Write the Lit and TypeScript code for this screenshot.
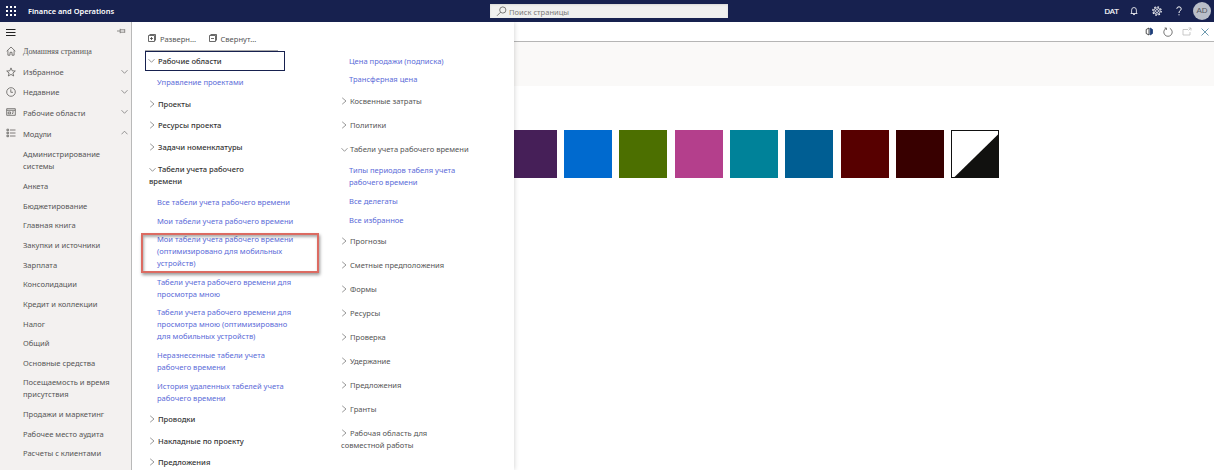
import { LitElement, html, css, svg, nothing } from "lit";
import { customElement } from "lit/decorators.js";
import { styleMap } from "lit/directives/style-map.js";

type Kind = "head" | "link" | "sub";
interface Row {
  text: string;
  /** distance from the top of this row to the top of the next one */
  h: number;
  kind?: Kind;
  open?: boolean;
}

const modules: Row[] = [
  { text: "Администрирование\nсистемы", h: 32 },
  { text: "Анкета", h: 20 },
  { text: "Бюджетирование", h: 19 },
  { text: "Главная книга", h: 20 },
  { text: "Закупки и источники", h: 20 },
  { text: "Зарплата", h: 19 },
  { text: "Консолидации", h: 20 },
  { text: "Кредит и коллекции", h: 20 },
  { text: "Налог", h: 19 },
  { text: "Общий", h: 20 },
  { text: "Основные средства", h: 19 },
  { text: "Посещаемость и время\nприсутствия", h: 32 },
  { text: "Продажи и маркетинг", h: 20 },
  { text: "Рабочее место аудита", h: 19 },
  { text: "Расчеты с клиентами", h: 16 },
];

const leftTree: Row[] = [
  { text: "Управление проектами", kind: "link", h: 22 },
  { text: "Проекты", kind: "head", h: 21 },
  { text: "Ресурсы проекта", kind: "head", h: 22 },
  { text: "Задачи номенклатуры", kind: "head", h: 22 },
  { text: "Табели учета рабочего\nвремени", kind: "head", open: true, h: 33 },
  { text: "Все табели учета рабочего времени", kind: "link", h: 19 },
  { text: "Мои табели учета рабочего времени", kind: "link", h: 18 },
  { text: "Мои табели учета рабочего времени\n(оптимизировано для мобильных\nустройств)", kind: "link", h: 43 },
  { text: "Табели учета рабочего времени для\nпросмотра мною", kind: "link", h: 30 },
  { text: "Табели учета рабочего времени для\nпросмотра мною (оптимизировано\nдля мобильных устройств)", kind: "link", h: 43 },
  { text: "Неразнесенные табели учета\nрабочего времени", kind: "link", h: 31 },
  { text: "История удаленных табелей учета\nрабочего времени", kind: "link", h: 33 },
  { text: "Проводки", kind: "head", h: 22 },
  { text: "Накладные по проекту", kind: "head", h: 21 },
  { text: "Предложения", kind: "head", h: 12 },
];

const rightTree: Row[] = [
  { text: "Цена продажи (подписка)", kind: "link", h: 18 },
  { text: "Трансферная цена", kind: "link", h: 22 },
  { text: "Косвенные затраты", kind: "sub", h: 24 },
  { text: "Политики", kind: "sub", h: 24 },
  { text: "Табели учета рабочего времени", kind: "sub", open: true, h: 21 },
  { text: "Типы периодов табеля учета\nрабочего времени", kind: "link", h: 31 },
  { text: "Все делегаты", kind: "link", h: 19 },
  { text: "Все избранное", kind: "link", h: 21 },
  { text: "Прогнозы", kind: "sub", h: 24 },
  { text: "Сметные предположения", kind: "sub", h: 24 },
  { text: "Формы", kind: "sub", h: 24 },
  { text: "Ресурсы", kind: "sub", h: 24 },
  { text: "Проверка", kind: "sub", h: 24 },
  { text: "Удержание", kind: "sub", h: 24 },
  { text: "Предложения", kind: "sub", h: 24 },
  { text: "Гранты", kind: "sub", h: 24 },
  { text: "Рабочая область для\nсовместной работы", kind: "sub", h: 24 },
];

const swatches = [
  { color: "#461f58", gap: 0 },
  { color: "#006acf", gap: 7 },
  { color: "#4c6f00", gap: 7 },
  { color: "#b43f8c", gap: 8 },
  { color: "#008299", gap: 7 },
  { color: "#005e93", gap: 7 },
  { color: "#570000", gap: 8 },
  { color: "#380000", gap: 7 },
];

const icon = (w: number, h: number, body: unknown, cls = "") =>
  html`<svg class="ic ${cls}" width=${w} height=${h} viewBox="0 0 ${w} ${h}">${body}</svg>`;

const chevronDown = icon(7, 6, svg`<path d="M.5 1.2 3.5 4.3 6.5 1.2"/>`, "chev");
const chevronUp = icon(7, 6, svg`<path d="M.5 4.3 3.5 1.2 6.5 4.3"/>`, "chev");
const chevronRight = icon(7, 8, svg`<path d="M1.2 .8 5 4 1.2 7.2"/>`, "chev");

const icons = {
  home: icon(10, 10, svg`<path d="M.7 5.2 5 1 9.3 5.2M1.9 4.4V9.2H4V6.3H6V9.2H8.1V4.4"/>`),
  star: icon(10, 10, svg`<path d="M5 .9 6.2 3.8 9.3 4 6.9 6 7.7 9 5 7.4 2.3 9 3.1 6 .7 4 3.8 3.8Z"/>`),
  clock: icon(10, 10, svg`<circle cx="5" cy="5" r="4.3"/><path d="M4.8 2.3V5.3H7"/>`),
  spaces: icon(10, 10, svg`<path d="M.7 1.7H9.3V8.3H.7ZM.7 3.3H9.3M2.2 5H4.6V6.9H2.2ZM6 5H8M6 6.5H7.2"/>`),
  modules: icon(10, 10, svg`<path d="M.9 1.2H2.6V2.7H.9ZM.9 4.2H2.6V5.7H.9ZM.9 7.2H2.6V8.7H.9ZM4 2H9.5M4 5H9.5M4 8H9.5"/>`),
};

@customElement("app-root")
export class AppRoot extends LitElement {
  static styles = css`
    :host {
      display: flex;
      flex-direction: column;
      width: 1214px;
      height: 470px;
      overflow: hidden;
      position: relative;
      background: #fff;
      color: #555;
      font: 7.58px/12px "Noto Sans", "Open Sans", sans-serif;
    }
    * { box-sizing: border-box; }
    .ic { display: block; flex: none; fill: none; stroke: #605e5c; stroke-width: 0.8; }
    .ic.chev { stroke: #777; stroke-width: 0.75; }
    .ic.light { stroke: #fff; }
    .ic.solid { fill: #fff; stroke: none; }

    .topbar { flex: none; height: 22px; display: flex; align-items: center; background: #17214f; color: #fff; }
    .waffle { margin-left: 6px; }
    .brand { margin-left: 12px; width: 462px; font-weight: 600; font-size: 7.45px; white-space: nowrap; }
    .search {
      width: 238px; height: 14px; padding: 0 0 0 6px; display: flex; align-items: center; gap: 2px;
      background: #f0f0ef; color: #7c7a78; font-size: 7.55px;
      box-shadow: inset 0 1px 2px #d8d8d6;
    }
    .search span { padding-top: 2px; }
    .tools { margin-left: auto; display: flex; align-items: center; }
    .company { margin: 2px 11px 0 0; font: 7.6px/12px "Liberation Sans", sans-serif; -webkit-text-stroke: 0.2px #fff; }
    .bell { margin-right: 14px; }
    .gear { margin-right: 14px; }
    .help { margin-right: 11px; }
    .avatar {
      width: 18px; height: 18px; margin-right: 3px; border-radius: 50%; background: #b9bec8;
      color: #54575f; font: 8px/18px "Liberation Sans", sans-serif; text-align: center;
    }

    .body { flex: 1; display: flex; min-height: 0; }
    .side { flex: none; width: 132px; background: #f3f1f0; border-right: 1px solid #b9b9b9; }
    .sidehead { height: 19px; display: flex; justify-content: space-between; padding: 6px 5px 0 6px; }
    .nav { display: flex; align-items: center; padding: 0 3px 0 6px; }
    .nav .label { flex: 1; margin-left: 7px; padding-top: 1px; }
    .nav .label.home { font-family: "Liberation Serif", serif; font-size: 8px; padding-top: 2px; }
    .modules { padding: 5px 0 0 23px; }
    .row { white-space: pre; }

    .panel { flex: none; width: 382px; display: flex; box-shadow: 0 0 5px #0003; clip-path: inset(0 -8px 0 0); z-index: 1; background: #fff; }
    .left { width: 193px; padding: 11px 0 0 13px; }
    .right { padding: 33px 0 0 15px; }
    .actions { display: flex; height: 18px; padding: 0 0 0 3px; width: 133px; border-bottom: 1px solid #aaa; }
    .action { display: flex; width: 60.5px; gap: 4px; }
    .action .ic { margin-top: 1px; stroke: #444; }
    .focus {
      width: 140px; height: 20px; display: flex; align-items: center; border: 1px solid #17214f; padding: 0 0 0 2px;
    }
    .tree { padding: 5px 0 0 4px; }
    .head, .focus { color: #333; font-weight: 500; }
    .link { color: #5b6bd8; padding-left: 8px; }
    .right .row { margin-left: 1px; }
    .row .ic { display: inline-block; vertical-align: -1px; margin-right: 2px; }
    .focus .ic { vertical-align: 0; margin-right: 3px; }
    .mark {
      position: absolute; left: 141px; top: 233px; width: 178px; height: 40px;
      border: 2px solid #dc6b62; box-shadow: 1px 2px 3px #0006, inset 1px 2px 3px #0005; z-index: 2;
    }

    .main { flex: 1; min-width: 0; }
    .mainbar { height: 20px; display: flex; align-items: center; justify-content: flex-end; border-bottom: 1px solid #b5b5b5; padding-right: 5px; }
    .mainbar .ic + .ic { margin-left: 9px; }
    .band { height: 44px; background: #faf9f8; }
    .colors { display: flex; margin-top: 44px; }
    .swatch { width: 48px; height: 48px; }
    .swatch.first { width: 43px; }
    .contrast { margin-left: 7px; display: block; }
  `;

  private tree(rows: Row[]) {
    return rows.map(
      (r) => html`<div class="row ${r.kind ?? ""}" style=${styleMap({ height: `${r.h}px` })}
        >${r.kind === "head" || r.kind === "sub" ? (r.open ? chevronDown : chevronRight) : nothing}${r.text}</div>`
    );
  }

  private nav(ic: unknown, label: string, h: number, chev: unknown, cls = "") {
    return html`<div class="nav" style=${styleMap({ height: `${h}px` })}>
      ${ic}<span class="label ${cls}">${label}</span>${chev}
    </div>`;
  }

  render() {
    return html`
      <header class="topbar">
        ${icon(10, 10, [0, 4, 8].map((y) => [0, 4, 8].map((x) => svg`<rect x=${x} y=${y} width="2" height="2"/>`)), "waffle solid")}
        <span class="brand">Finance and Operations</span>
        <div class="search">
          ${icon(11, 11, svg`<circle cx="6.8" cy="4" r="3.1"/><path d="M4.6 6.2 1 9.8"/>`)}
          <span>Поиск страницы</span>
        </div>
        <div class="tools">
          <span class="company">DAT</span>
          ${icon(8, 10, svg`<path d="M1.6 7.4V4.1A2.4 2.6 0 0 1 6.4 4.1V7.4M.6 7.5H7.4M3 8.2Q4 9.6 5 8.2"/>`, "light bell")}
          ${icon(10, 10, svg`<circle cx="5" cy="5" r="1.5"/><circle cx="5" cy="5" r="3.2"/><circle cx="5" cy="5" r="4.2" stroke-width="1.2" stroke-dasharray="1.6 1.7"/>`, "light gear")}
          ${icon(6, 10, svg`<path d="M.8 2.8Q.9.8 3 .8T5.2 2.8Q5.2 4 4 4.8 3 5.5 3 7M3 8.2V9.3" stroke-width="1"/>`, "light help")}
          <span class="avatar">AD</span>
        </div>
      </header>
      <div class="body">
        <nav class="side">
          <div class="sidehead">
            ${icon(10, 9, svg`<path d="M0 1.5H9.5M0 4.5H9.5M0 7.5H9.5" stroke="#222" stroke-width="1"/>`)}
            ${icon(9, 6, svg`<path d="M0 3H3M3.2.8V5.2M3.2 1.8H7.5M3.2 4.2H7.5M7.7 1.2V4.8" stroke-width=".7"/>`)}
          </div>
          ${this.nav(icons.home, "Домашняя страница", 20, nothing, "home")}
          ${this.nav(icons.star, "Избранное", 21, chevronDown)}
          ${this.nav(icons.clock, "Недавние", 19, chevronDown)}
          ${this.nav(icons.spaces, "Рабочие области", 22, chevronDown)}
          ${this.nav(icons.modules, "Модули", 20, chevronUp)}
          <div class="modules">${this.tree(modules)}</div>
        </nav>
        <section class="panel">
          <div class="left">
            <div class="actions">
              <span class="action">${icon(8, 8, svg`<path d="M1.5.5H7.5V6.5M.5 1.5H6.5V7.5H.5ZM2 4.5H5M3.5 3V6"/>`)}Разверн...</span>
              <span class="action">${icon(8, 8, svg`<path d="M1.5.5H7.5V6.5M.5 1.5H6.5V7.5H.5ZM2 4.5H5"/>`)}Свернут...</span>
            </div>
            <div class="focus row"><span>${chevronDown}Рабочие области</span></div>
            <div class="tree">${this.tree(leftTree)}</div>
          </div>
          <div class="right">${this.tree(rightTree)}</div>
        </section>
        <main class="main">
          <div class="mainbar">
            ${icon(9, 9, svg`<path d="M4 1 1.2 2.5V6.5L4 8Z" stroke="#222"/><path d="M5.2 1 7.5 2.5V6.5L5.2 8Z" fill="#1c3c78" stroke="#1c3c78"/>`)}
            ${icon(10, 10, svg`<path d="M3.2 1.3A4.2 4.2 0 1 0 6.8 1.3M3.4 3V1H1.6" stroke="#555"/>`)}
            ${icon(10, 10, svg`<path d="M6 2.5H1V8H8V5M6.5 1H9V3.5M9 1 6.5 3.5" stroke="#bbb"/>`)}
            ${icon(8, 8, svg`<path d="M.5.5 7.5 7.5M7.5.5.5 7.5" stroke="#47809a"/>`)}
          </div>
          <div class="band"></div>
          <div class="colors">
            ${swatches.map((s, i) => html`<div class="swatch ${i === 0 ? "first" : ""}" style=${styleMap({ background: s.color, marginLeft: `${s.gap}px` })}></div>`)}
            <svg class="contrast" width="48" height="48" viewBox="0 0 48 48">
              <rect x=".5" y=".5" width="47" height="47" fill="#fff" stroke="#111"/>
              <path d="M48 3.5V48H2.5Z" fill="#11110f"/>
            </svg>
          </div>
        </main>
      </div>
      <div class="mark"></div>
    `;
  }
}
